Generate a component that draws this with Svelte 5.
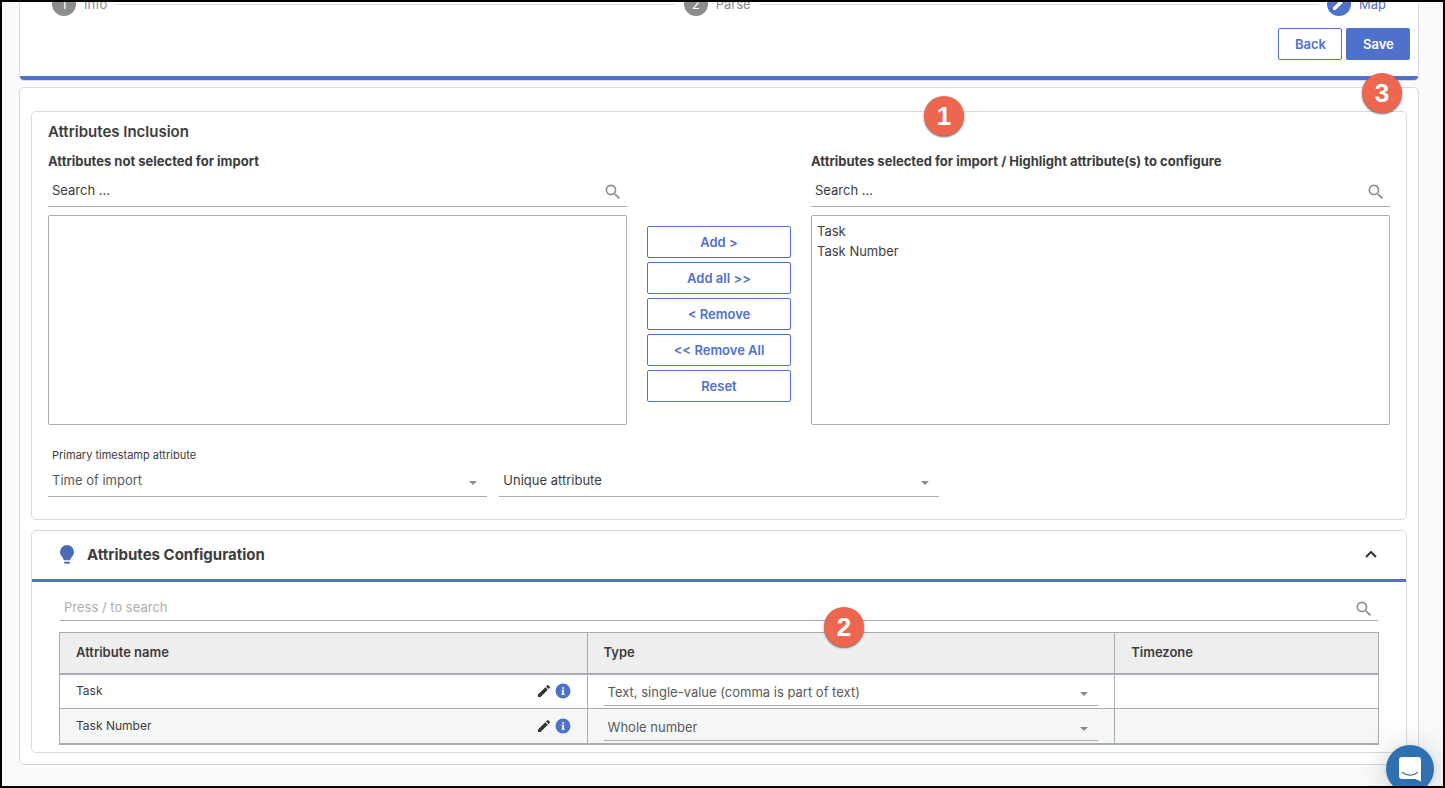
<script>
    let available = [];
    let selected = ['Task', 'Task Number'];

    const actions = ['Add >', 'Add all >>', '< Remove', '<< Remove All', 'Reset'];

    const steps = [
        { label: 'Info', mark: '1' },
        { label: 'Parse', mark: '2' },
        { label: 'Map', active: true }
    ];

    const attributes = [
        { id: 'task', name: 'Task', type: 'Text, single-value (comma is part of text)' },
        { id: 'task-number', name: 'Task Number', type: 'Whole number' }
    ];

    const types = attributes.map((attribute) => attribute.type);

    const lists = [
        { id: 'available', title: 'Attributes not selected for import', items: available },
        { id: 'selected', title: 'Attributes selected for import / Highlight attribute(s) to configure', items: selected }
    ];
</script>

{#snippet searchIcon()}
    <svg class="search-icon" viewBox="0 0 24 24" width="20" height="20" aria-hidden="true">
        <path d="M15.5 14h-.79l-.28-.27A6.47 6.47 0 0 0 16 9.5 6.5 6.5 0 1 0 9.5 16c1.61 0 3.09-.59 4.23-1.57l.27.28v.79l5 4.99L20.49 19l-4.99-5zm-6 0a4.5 4.5 0 1 1 0-9 4.5 4.5 0 0 1 0 9z" />
    </svg>
{/snippet}

{#snippet pencil(size)}
    <svg viewBox="0 0 24 24" width={size} height={size} fill="currentColor" aria-hidden="true">
        <path d="M3 17.25V21h3.75L17.81 9.94l-3.75-3.75L3 17.25zM20.71 7.04a1 1 0 0 0 0-1.41l-2.34-2.34a1 1 0 0 0-1.41 0l-1.83 1.83 3.75 3.75 1.83-1.83z" />
    </svg>
{/snippet}

{#snippet list(item)}
    <div class="list">
        <label class="subtitle" for={item.id}>{item.title}</label>
        <div class="search">
            <input type="text" placeholder="Search ..." aria-label="Search {item.id}">
            {@render searchIcon()}
        </div>
        <select class="listbox" id={item.id} multiple>
            {#each item.items as name}
                <option>{name}</option>
            {/each}
        </select>
    </div>
{/snippet}

<div class="frame">
    <div class="page">
        <header>
            <ol class="steps">
                {#each steps as step, index}
                    {#if index > 0}
                        <li class="line" role="presentation"></li>
                    {/if}
                    <li class="step" class:active={step.active}>
                        <span class="mark">
                            {#if step.active}{@render pencil(16)}{:else}{step.mark}{/if}
                        </span>
                        {step.label}
                    </li>
                {/each}
            </ol>

            <div class="buttons">
                <button>Back</button>
                <button class="primary">Save</button>
            </div>

            <span class="badge three">3</span>
        </header>

        <main>
            <span class="badge one">1</span>

            <section class="inclusion">
                <h2>Attributes Inclusion</h2>

                <div class="transfer">
                    {@render list(lists[0])}

                    <div class="actions">
                        {#each actions as action}
                            <button>{action}</button>
                        {/each}
                    </div>

                    {@render list(lists[1])}
                </div>

                <div class="fields">
                    <div class="field">
                        <label for="timestamp">Primary timestamp attribute</label>
                        <div class="select">
                            <select id="timestamp"><option>Time of import</option></select>
                        </div>
                    </div>
                    <div class="field">
                        <div class="select empty">
                            <select aria-label="Unique attribute"><option>Unique attribute</option></select>
                        </div>
                    </div>
                </div>
            </section>

            <section class="configuration">
                <div class="title">
                    <svg class="bulb" viewBox="0 0 14 20" width="14" height="20" aria-hidden="true">
                        <path d="M7 0a7 7 0 0 0-7 7c0 2.4 1.2 4.1 2.6 5.4.5.5.8 1.1.8 1.8v.2c0 .5.4.8.8.8h5.6c.5 0 .8-.3.8-.8v-.2c0-.7.3-1.3.8-1.8C12.8 11.100 14 9.400 14 7a7 7 0 0 0-7-7zM4 16.800h6v1l-1 1H5l-1-1z" />
                    </svg>
                    <h2>Attributes Configuration</h2>
                    <button class="icon" aria-label="Collapse">
                        <svg viewBox="0 0 12 8" width="12" height="8" aria-hidden="true">
                            <path d="M1 6l5-5 5 5" fill="none" stroke="#333" stroke-width="2" />
                        </svg>
                    </button>
                </div>

                <div class="content">
                    <div class="search filter">
                        <input type="text" placeholder="Press / to search" aria-label="Search attributes">
                        {@render searchIcon()}
                    </div>

                    <table>
                        <thead>
                            <tr>
                                <th class="wide">Attribute name</th>
                                <th class="wide">Type</th>
                                <th>Timezone</th>
                            </tr>
                        </thead>
                        <tbody>
                            {#each attributes as attribute (attribute.id)}
                                <tr>
                                    <td>
                                        <div class="name">
                                            <span>{attribute.name}</span>
                                            <button class="icon" aria-label="Edit {attribute.name}">{@render pencil(16)}</button>
                                            <button class="icon" aria-label="About {attribute.name}">
                                                <svg viewBox="0 0 16 16" width="16" height="16" aria-hidden="true">
                                                    <circle cx="8" cy="8" r="7.5" fill="#4f71cb" />
                                                    <path d="M7.2 4.2h1.8v1.6H7.2zM6.6 6.8H9v4h.8v1H6.4v-1h.8v-3h-.6z" fill="#fff" />
                                                </svg>
                                            </button>
                                        </div>
                                    </td>
                                    <td class="type">
                                        <div class="select">
                                            <select aria-label="Type of {attribute.name}" value={attribute.type}>
                                                {#each types as type}
                                                    <option>{type}</option>
                                                {/each}
                                            </select>
                                        </div>
                                    </td>
                                    <td></td>
                                </tr>
                            {/each}
                        </tbody>
                    </table>
                </div>

                <span class="badge two">2</span>
            </section>
        </main>
    </div>

    <button class="chat" aria-label="Open chat">
        <svg viewBox="0 0 22 25" width="22" height="25" aria-hidden="true">
            <path d="M3 0h16a3 3 0 0 1 3 3v21.5L16.5 22H3a3 3 0 0 1-3-3V3a3 3 0 0 1 3-3z" fill="#fff" />
            <path d="M3.5 15.5c4.500 3.500 10.500 3.500 15 0" fill="none" stroke="#2f70b3" stroke-width="1.2" stroke-linecap="round" />
        </svg>
    </button>
</div>

<style>
    :global(body) {
        margin: 0;
    }

    .frame {
        position: relative;
        box-sizing: border-box;
        height: 100vh;
        overflow: hidden;
        border: 2px solid #000;
        background: #f9fafc;
        color: #3c3c3c;
        font: 13px/20px Inter, sans-serif;
    }

    /* the page is scrolled past the top of the stepper */
    .page {
        margin-top: -10px;
        padding: 0 24px 0 17px;
    }

    header, main, section {
        position: relative;
        box-sizing: border-box;
        border: 1px solid #d8dade;
        border-radius: 5px;
        background: #fff;
    }

    header {
        border-top: 0;
        border-radius: 0 0 5px 5px;
    }

    header::after {
        content: '';
        display: block;
        height: 4px;
        border-radius: 0 0 4px 4px;
        background: #4f71cb;
    }

    .steps {
        display: flex;
        align-items: center;
        gap: 8px;
        margin: 0;
        padding: 0 32px;
        list-style: none;
        color: #8c8c8c;
    }

    .step {
        display: flex;
        align-items: center;
        gap: 8px;
        height: 24px;
    }

    .line {
        flex: 1;
        border-top: 1px solid #e0e0e0;
    }

    .mark {
        display: flex;
        align-items: center;
        justify-content: center;
        width: 24px;
        height: 24px;
        border-radius: 50%;
        background: #8c8c8c;
        color: #fff;
    }

    .active {
        color: #4f71cb;
    }

    .active .mark {
        background: #4f71cb;
        color: #fff;
    }

    .buttons {
        display: flex;
        justify-content: flex-end;
        gap: 4px;
        padding: 12px 8px 16px;
    }

    button {
        height: 32px;
        padding: 0 16px;
        border: 1px solid #4f71cb;
        border-radius: 2px;
        background: #fff;
        color: #4f71cb;
        font: 600 13px/20px Inter, sans-serif;
        cursor: pointer;
    }

    .primary {
        background: #4f71cb;
        color: #fff;
    }

    .buttons button {
        width: 64px;
    }

    .icon {
        display: flex;
        align-items: center;
        height: 16px;
        padding: 0;
        border: 0;
        background: none;
        color: #333;
    }

    main {
        display: grid;
        gap: 10px;
        margin-top: 6px;
        padding: 23px 11px 11px;
    }

    h2 {
        margin: 0;
        font-size: 15px;
        line-height: 20px;
        font-weight: 600;
    }

    .inclusion {
        padding: 10px 16px 22px;
    }

    .transfer {
        display: grid;
        grid-template-columns: 1fr 144px 1fr;
        gap: 20px;
        margin-top: 9px;
    }

    .subtitle {
        display: block;
        font-weight: 700;
    }

    .search {
        display: flex;
        align-items: center;
        box-sizing: border-box;
        height: 36px;
        border-bottom: 1px solid #a9abb0;
        padding: 3px 4px 0;
    }

    .search-icon {
        margin-top: 3px;
        fill: #8c8c8c;
    }

    input {
        flex: 1;
        min-width: 0;
        height: 24px;
        padding: 0;
        border: 0;
        outline: 0;
        background: none;
        color: #3c3c3c;
        font: inherit;
    }

    input::placeholder {
        color: #3c3c3c;
        opacity: 1;
    }

    .listbox {
        display: block;
        box-sizing: border-box;
        width: 100%;
        height: 210px;
        margin-top: 8px;
        padding: 5px;
        border: 1px solid #a9abb5;
        border-radius: 2px;
        background: #fff;
        color: #3c3c3c;
        font: inherit;
        outline: 0;
    }

    .listbox option {
        padding: 2px 0;
    }

    .actions {
        display: grid;
        gap: 4px;
        align-content: start;
        padding-top: 75px;
    }

    .fields {
        display: grid;
        grid-template-columns: repeat(3, 1fr);
        align-items: end;
        gap: 12px;
        margin-top: 20px;
    }

    .field label {
        display: block;
        padding-left: 4px;
        font-size: 11px;
    }

    .select {
        position: relative;
        border-bottom: 1px solid #a9abb0;
    }

    .select::after {
        content: '';
        position: absolute;
        top: 50%;
        right: 10px;
        border: 4px solid transparent;
        border-top-color: #8c8c8c;
        border-bottom: 0;
        pointer-events: none;
    }

    .select select {
        display: block;
        width: 100%;
        height: 31px;
        padding: 0 4px 2px;
        border: 0;
        outline: 0;
        background: none;
        appearance: none;
        color: #5a5a5a;
        font: inherit;
    }

    .empty select {
        color: #3c3c3c;
    }

    .title {
        display: flex;
        align-items: center;
        gap: 13px;
        height: 48px;
        padding: 0 29px 0 28px;
        border-bottom: 3px solid #4f71cb;
    }

    .title h2 {
        flex: 1;
        font-weight: 700;
    }

    .bulb {
        fill: #4a6db5;
    }

    .content {
        padding: 12px 27px 7px;
    }

    .filter {
        height: 27px;
        margin: 0 1px 11px;
        padding-top: 0;
    }

    .filter input::placeholder {
        color: #adadad;
    }

    table {
        width: 100%;
        table-layout: fixed;
        border-collapse: collapse;
        border: 1px solid #a9abb5;
        border-bottom-width: 2px;
    }

    th, td {
        box-sizing: border-box;
        padding: 0 16px;
        border: 1px solid #a9abb5;
        text-align: left;
    }

    th {
        height: 41px;
        padding-bottom: 2px;
        border-bottom-width: 2px;
        background: #eee;
        font-weight: 600;
    }

    .wide {
        width: 40%;
    }

    td {
        height: 35px;
        font-size: 12px;
    }

    tbody tr:nth-child(even) {
        background: #f5f7f7;
    }

    .name {
        display: flex;
        align-items: center;
        gap: 3px;
    }

    .name span {
        flex: 1;
    }

    .type {
        padding-bottom: 2px;
        vertical-align: bottom;
        font-size: 13px;
    }

    .type select {
        height: 26px;
        padding-bottom: 0;
    }

    .badge {
        position: absolute;
        z-index: 1;
        width: 40px;
        height: 40px;
        border-radius: 50%;
        background: #ec6650;
        box-shadow: 0 1px 2px #0009;
        color: #fff;
        font: bold 26px/40px "Liberation Sans", sans-serif;
        text-align: center;
    }

    .one {
        top: 8px;
        left: 904px;
    }

    .two {
        top: 76px;
        left: 792px;
    }

    .three {
        right: 16px;
        bottom: -33px;
    }

    .chat {
        position: absolute;
        right: 9px;
        bottom: -7px;
        display: flex;
        align-items: center;
        justify-content: center;
        width: 48px;
        height: 48px;
        padding: 0;
        border: 0;
        border-radius: 50%;
        background: #2f70b3;
        box-shadow: 0 1px 6px #0001, 0 2px 32px #0003;
    }
</style>
